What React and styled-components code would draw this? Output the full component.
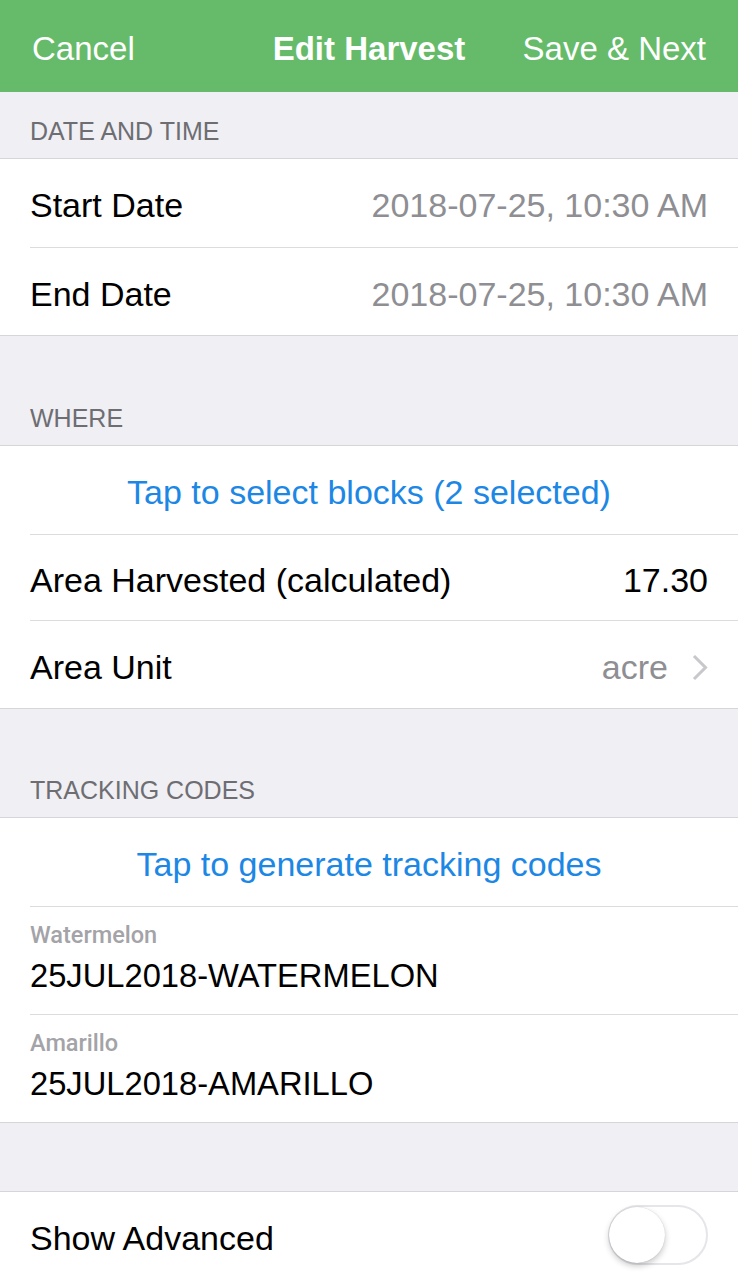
import React from 'react';
import styled, { createGlobalStyle } from 'styled-components';

const GlobalStyle = createGlobalStyle`
  html, body {
    margin: 0;
    padding: 0;
    background: #efeff4;
    font-family: "Liberation Sans", Arial, sans-serif;
    -webkit-font-smoothing: antialiased;
  }
`;

const Page = styled.div`
  width: 738px;
  min-height: 1280px;
  background: #efeff4;
  overflow: hidden;
`;

const NavBar = styled.div`
  height: 92px;
  background: #66bb6a;
  display: grid;
  grid-template-columns: 1fr auto 1fr;
  align-items: center;
  padding: 0 32px;
  box-sizing: border-box;
  color: #fff;
  font-size: 33px;
`;

const NavButton = styled.span`
  font-weight: ${(p) => (p.bold ? 'bold' : 'normal')};
  text-align: ${(p) => p.align || 'center'};
  padding-top: 6px;
`;

const SectionHeader = styled.div`
  height: ${(p) => p.height}px;
  box-sizing: border-box;
  display: flex;
  align-items: flex-end;
  padding: 0 30px 12px;
  color: #6d6d72;
  font-size: 25px;
  line-height: 30px;
  border-bottom: 1px solid #d6d6da;
`;

const Group = styled.div`
  background: #fff;
  border-bottom: 1px solid #d6d6da;
`;

const Row = styled.div`
  margin-left: 30px;
  padding-right: 30px;
  padding-top: 5px;
  box-sizing: border-box;
  height: ${(p) => p.height || 88}px;
  display: flex;
  align-items: center;
  justify-content: ${(p) => (p.center ? 'center' : 'space-between')};
  border-top: ${(p) => (p.first ? 'none' : '1px solid #dcdce0')};
  font-size: 34px;
  color: #000;
`;

const Value = styled.span`
  color: ${(p) => (p.dark ? '#000' : '#8e8e93')};
  display: flex;
  align-items: center;
  gap: 24px;
`;

const Action = styled.span`
  color: #1c87e4;
`;

const CodeRow = styled.div`
  margin-left: 30px;
  height: 108px;
  box-sizing: border-box;
  display: flex;
  flex-direction: column;
  justify-content: center;
  border-top: 1px solid #dcdce0;
`;

const CodeLabel = styled.div`
  color: #a3a3a8;
  font-family: Roboto, "Liberation Sans", sans-serif;
  font-weight: 500;
  font-size: 23.5px;
  line-height: 26px;
  margin-bottom: 10px;
  margin-top: -5px;
`;

const CodeValue = styled.div`
  font-size: 32.7px;
  line-height: 36px;
`;

const Toggle = styled.div`
  width: 100px;
  height: 60px;
  margin-top: -7px;
  border-radius: 30px;
  border: 2px solid #e5e5ea;
  box-sizing: border-box;
  position: relative;
  background: #fff;
`;

const Knob = styled.div`
  position: absolute;
  left: -1px;
  top: 0px;
  width: 56px;
  height: 56px;
  border-radius: 50%;
  background: #fff;
  box-shadow: 0 3px 6px rgba(0, 0, 0, 0.22), 0 0 1px rgba(0, 0, 0, 0.2);
`;

const Chevron = () => (
  <svg width="16" height="27" viewBox="0 0 16 27">
    <path d="M2 2 L13.5 13.5 L2 25" fill="none" stroke="#c7c7cc" strokeWidth="3" />
  </svg>
);

const App = () => {
  const codes = [
    { label: 'Watermelon', value: '25JUL2018-WATERMELON' },
    { label: 'Amarillo', value: '25JUL2018-AMARILLO' },
  ];

  return (
    <Page>
      <GlobalStyle />
      <NavBar>
        <NavButton align="left">Cancel</NavButton>
        <NavButton bold>Edit Harvest</NavButton>
        <NavButton align="right">Save &amp; Next</NavButton>
      </NavBar>

      <SectionHeader height={67}>DATE AND TIME</SectionHeader>
      <Group>
        <Row first>
          Start Date
          <Value>2018-07-25, 10:30 AM</Value>
        </Row>
        <Row>
          End Date
          <Value>2018-07-25, 10:30 AM</Value>
        </Row>
      </Group>

      <SectionHeader height={110}>WHERE</SectionHeader>
      <Group>
        <Row first center>
          <Action>Tap to select blocks (2 selected)</Action>
        </Row>
        <Row height={86}>
          Area Harvested (calculated)
          <Value dark>17.30</Value>
        </Row>
        <Row>
          Area Unit
          <Value>
            acre
            <Chevron />
          </Value>
        </Row>
      </Group>

      <SectionHeader height={109}>TRACKING CODES</SectionHeader>
      <Group>
        <Row first center>
          <Action>Tap to generate tracking codes</Action>
        </Row>
        {codes.map((c) => (
          <CodeRow key={c.label}>
            <CodeLabel>{c.label}</CodeLabel>
            <CodeValue>{c.value}</CodeValue>
          </CodeRow>
        ))}
      </Group>

      <SectionHeader height={69} />
      <Group>
        <Row first>
          Show Advanced
          <Toggle>
            <Knob />
          </Toggle>
        </Row>
      </Group>
    </Page>
  );
};

export default App;
